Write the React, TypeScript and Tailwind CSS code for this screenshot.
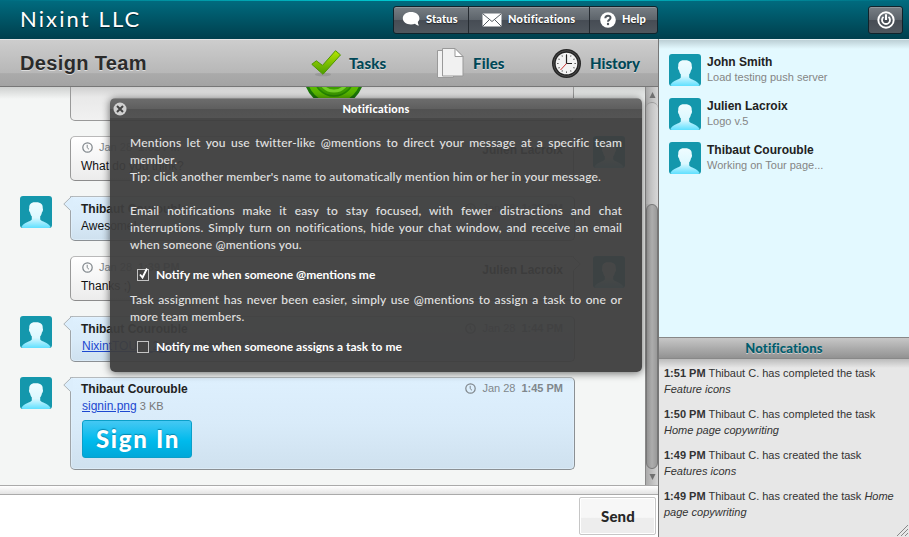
import React from "react";

function Avatar({ id }: { id: string }) {
  return (
    <svg className="block size-8 shrink-0" viewBox="0 0 32 32">
      <defs>
        <linearGradient id={id} x1="0" y1="0" x2="0" y2="1">
          <stop offset="0" stopColor="#effcff" />
          <stop offset=".6" stopColor="#dcf8ff" />
          <stop offset="1" stopColor="#5fe0ff" />
        </linearGradient>
      </defs>
      <rect width="32" height="32" rx="3" fill="#1497ac" />
      <path
        d="M15.500 6.300C11 6 8.900 8.500 9.300 12.300c-.7.700-.3 3.400.8 4.100.3 2 .9 3 1.700 3.900v3.200C10.500 25.600 4 26.300 1.500 30.700L2.500 32h27l1-1.300C28 26.300 21.500 25.600 20.200 23.500v-3.200c.8-.9 1.400-1.900 1.700-3.900 1.100-.7 1.500-3.400.8-4.100.4-3.800-1.700-6.200-7.200-6z"
        fill={`url(#${id})`}
      />
    </svg>
  );
}

function Clock() {
  return (
    <svg className="size-[11px] shrink-0" viewBox="0 0 11 11" fill="none" stroke="currentColor">
      <circle cx="5.500" cy="5.500" r="4.700" strokeWidth="1.200" />
      <path d="M5.200 2.800V5.700L7 7.300" strokeWidth="1" />
    </svg>
  );
}

function Stamp({ time }: { time: string }) {
  return (
    <span className="flex items-center gap-[6px] pr-px pb-px text-[11px] text-[#80878c]">
      <Clock />
      <span>Jan 28</span>
      <b>{time}</b>
    </span>
  );
}

function Bubble({ height, id, children }: { height: string; id: string; children: React.ReactNode }) {
  return (
    <div className="flex">
      <Avatar id={id} />
      <div
        className={`relative ml-[18px] w-[505px] rounded-[5px] rounded-tl-none border border-t-[#b5babd] border-r-[#8b9094] border-b-[#8b9094] border-l-[#a0a5a9] bg-linear-to-b from-[#def0fe] via-[#d9ebf9] to-[#cfe1ef] px-[10px] shadow-[inset_0_0_0_1px_#e6f3fd80] ${height}`}
      >
        <svg className="absolute -top-px -left-[8px] h-4 w-[10px]" viewBox="0 0 10 16">
          <path d="M10 .5H8.500L.8 8 7.500 14.500H10z" fill="#dceefc" />
          <path d="M10 .5H8.500L.8 8 7.500 14.500" fill="none" stroke="#adb3b7" />
        </svg>
        {children}
      </div>
    </div>
  );
}

function Mine({ time, text, id }: { time: string; text: string; id: string }) {
  return (
    <div className="flex pl-[50px]">
      <div className="relative h-[45px] w-[504px] rounded-[5px] rounded-tr-none border border-t-[#b9b9b9] border-r-[#999] border-b-[#8c8c8c] border-l-[#999] bg-linear-to-b from-white to-[#ececec] px-[10px] pt-[4px]">
        <svg className="absolute -top-px -right-[8px] h-4 w-[10px]" viewBox="0 0 10 16">
          <path d="M0 .5H1.500L9.200 8 2.500 14.500H0z" fill="#fafafa" />
          <path d="M0 .5H1.500L9.200 8 2.500 14.500" fill="none" stroke="#aaa" />
        </svg>
        <div className="flex h-[14px] items-center justify-between pl-px">
          <Stamp time={time} />
          <b className="pt-[3px] text-[12px] leading-[14px] text-[#222]">Julien Lacroix</b>
        </div>
        <div className="mt-[4px] text-[12px] leading-[14px] text-[#111]">{text}</div>
      </div>
      <div className="ml-[19px]">
        <Avatar id={id} />
      </div>
    </div>
  );
}

function Head({ time }: { time: string }) {
  return (
    <div className="flex h-[14px] items-center justify-between">
      <b className="text-[12px] text-[#222]">Thibaut Courouble</b>
      <Stamp time={time} />
    </div>
  );
}

function Line({ children }: { children: React.ReactNode }) {
  return <div className="whitespace-nowrap [text-align-last:justify]">{children}</div>;
}

function Check({ on, children }: { on?: boolean; children: React.ReactNode }) {
  return (
    <div className="flex h-[17px] items-center gap-[6px] pl-[7px] text-[12px] font-bold tracking-normal text-white">
      <svg className="h-4 w-[13px] shrink-0" viewBox="0 0 13 16" fill="none">
        <rect x=".5" y="2.500" width="11" height="11" fill="#444" stroke="#c4c4c4" />
        {on && <path d="M3 7.500L5.500 10.500L10 1.500" stroke="#fff" strokeWidth="1.900" />}
      </svg>
      <span>{children}</span>
    </div>
  );
}

const people = [
  ["John Smith", "Load testing push server"],
  ["Julien Lacroix", "Logo v.5"],
  ["Thibaut Courouble", "Working on Tour page..."],
];

const events = [
  { time: "1:51 PM", verb: "completed", inline: "", task: "Feature icons" },
  { time: "1:50 PM", verb: "completed", inline: "", task: "Home page copywriting" },
  { time: "1:49 PM", verb: "created", inline: "", task: "Features icons" },
  { time: "1:49 PM", verb: "created", inline: "Home", task: "page copywriting" },
];

const ticks = [0, 30, 60, 90, 120, 150, 180, 210, 240, 270, 300, 330];

export default function App() {
  return (
    <div className="relative flex h-[537px] w-[909px] flex-col overflow-hidden bg-white font-['Liberation_Sans',Arial,sans-serif]">
      <header className="flex h-[39px] shrink-0 flex-col bg-linear-to-b from-[#006c80] to-[#003f4d]">
        <div className="h-px shrink-0 bg-linear-to-r from-[#006c80] via-[#00d8de] to-[#006c80]" />
        <div className="flex h-[37px] items-center pr-[6px] pl-[20px]">
          <h1 className="w-[373px] pb-[2px] font-['Lato',sans-serif] text-[22px] leading-[34px] tracking-[2.1px] text-white [text-shadow:0_1px_1px_#00232c]">
            Nixint LLC
          </h1>
          <nav className="flex h-[28px] w-[265px] rounded-[3px] border border-[#10232b] bg-[linear-gradient(#777e84,#5d646b_49%,#464c54_50%,#50575e)] font-['Lato',sans-serif] text-[11px] font-black tracking-[.15px] text-white shadow-[inset_0_1px_0_#90979b] [text-shadow:0_1px_1px_#222]">
            <div className="flex w-[75px] items-center gap-[5px] border-r border-[#252b31] pl-[8px]">
              <svg className="h-[17px] w-[19px]" viewBox="0 0 19 17">
                <path d="M9 1C4.300 1 .8 3.700.8 7.200s3.500 6.200 8.200 6.200c1.500 0 2.800-.2 4-.7 1 1 2.600 1.800 4 1.800-.9-1-1.200-2.500-1.100-3.700 1-1 1.500-2.200 1.500-3.600C17.400 3.700 13.700 1 9 1z" fill="#fff" />
              </svg>
              Status
            </div>
            <div className="flex w-[121px] items-center gap-[6px] border-r border-[#252b31] pl-[13px]">
              <svg className="h-[14px] w-5" viewBox="0 0 20 14">
                <rect x=".5" y=".5" width="19" height="13" rx="1" fill="#fff" />
                <path d="M1 1l9 7.500L19 1M1 13l6.500-6.500M19 13l-6.500-6.500" fill="none" stroke="#555c62" />
              </svg>
              <span className="tracking-[.28px]">Notifications</span>
            </div>
            <div className="flex items-center gap-[6px] pl-[10px]">
              <svg className="size-4" viewBox="0 0 16 16">
                <circle cx="8" cy="8" r="7.800" fill="#fff" />
                <path d="M5.300 6.300C5.400 2.800 10.700 3 10.500 6c-.1 1.900-2.500 1.900-2.500 3.800" fill="none" stroke="#50575e" strokeWidth="2" />
                <circle cx="8" cy="12" r="1.200" fill="#50575e" />
              </svg>
              Help
            </div>
          </nav>
          <div className="ml-auto flex h-[28px] w-[35px] items-center justify-center rounded-[3px] border border-[#10232b] bg-[linear-gradient(#777e84,#5d646b_49%,#464c54_50%,#50575e)] shadow-[inset_0_1px_0_#90979b]">
            <svg className="size-[18px]" viewBox="0 0 18 18" fill="none">
              <circle cx="9" cy="9" r="7.700" stroke="#fff" strokeWidth="1.900" />
              <path d="M6.500 5.900A4 4 0 1 0 11.500 5.900" stroke="#fff" strokeWidth="1.800" />
              <path d="M9 3.200V9" stroke="#fff" strokeWidth="2" />
            </svg>
          </div>
        </div>
      </header>

      <div className="flex min-h-0 flex-1">
        <main className="flex w-[659px] flex-col border-r border-[#777]">
          <div className="flex h-[48px] shrink-0 items-center border-t border-b border-t-[#e5e5e5] border-b-[#777] bg-[linear-gradient(#cdcdcd,#b7b7b7_72%,#aaa_73%,#a3a3a3)] pl-[20px] font-['Lato',sans-serif] text-[15px] font-black tracking-[.15px] text-[#004757] [text-shadow:0_1px_0_#ddd]">
            <h2 className="w-[289px] font-['Liberation_Sans',Arial,sans-serif] text-[20px] font-bold tracking-[.35px] text-[#2b2b2b]">Design Team</h2>
            <div className="flex w-[127px] items-center gap-[6px]">
              <svg className="h-7 w-[34px]" viewBox="0 0 34 28">
                <defs>
                  <linearGradient id="tick" x1="0" y1="0" x2="0" y2="1">
                    <stop offset="0" stopColor="#b5e600" />
                    <stop offset="1" stopColor="#4a9d00" />
                  </linearGradient>
                </defs>
                <ellipse cx="14" cy="25.500" rx="8" ry="1.800" fill="#888" opacity=".5" />
                <path d="M2.800 15.300L7.300 11.800l6.200 4.600L26.500 1.700l5 4.200L14 25.300z" fill="url(#tick)" stroke="#4f9600" />
              </svg>
              Tasks
            </div>
            <div className="flex w-[115px] items-center gap-[9px]">
              <svg className="h-[33px] w-7" viewBox="0 0 28 33" fill="#f1f1f1" stroke="#999">
                <path d="M1.500 3.500h16v27h-16z" />
                <path d="M6.500 1.500H19l8 8v19.500H6.500z" />
                <path d="M19 1.500v8h8z" fill="#fff" />
              </svg>
              Files
            </div>
            <div className="flex items-center gap-[8px] tracking-normal">
              <svg className="size-[31px]" viewBox="0 0 31 31">
                <circle cx="15.500" cy="15.500" r="14.500" fill="#262626" />
                <circle cx="15.500" cy="15.500" r="12.800" fill="none" stroke="#555" strokeWidth=".8" />
                <circle cx="15.500" cy="15.500" r="10.800" fill="#f3f3f3" />
                {ticks.map((a) => (
                  <path key={a} d="M15.500 6.200v1.300" stroke="#444" transform={`rotate(${a} 15.500 15.500)`} />
                ))}
                <path d="M15.500 7v8.500H21" fill="none" stroke="#222" strokeWidth="1.200" />
                <path d="M15.500 15.500L9.500 22" stroke="#c33" />
              </svg>
              History
            </div>
          </div>

          <div className="flex min-h-0 flex-1">
            <div className="relative flex w-[645px] flex-col gap-[15px] overflow-hidden bg-[#f4f6f5] bg-[linear-gradient(#cfd1d0,#f4f6f5_12px)] pl-[20px]">
              <div className="relative ml-[50px] h-[34px] w-[504px] shrink-0 overflow-hidden rounded-b-[5px] border border-t-0 border-[#999] bg-[linear-gradient(#cfcfcf,#e9e9e9_10px,#f1f1f1)]">
                <svg className="ml-[231px] h-[30px] w-[64px]" viewBox="0 0 64 30">
                  <circle cx="32" cy="-11" r="30" fill="#1c7a08" />
                  <circle cx="32" cy="-11" r="27" fill="#5ab900" />
                  <circle cx="32" cy="-11" r="20" fill="#3d9d00" stroke="#268700" strokeWidth="1.500" />
                  <circle cx="32" cy="-11" r="15" fill="none" stroke="#74ce28" strokeWidth="3" />
                </svg>
              </div>
              <Mine id="a1" time="1:32 PM" text="What do you think?" />
              <Bubble id="a2" height="h-[45px] pt-[5px]">
                <Head time="1:33 PM" />
                <div className="mt-[3px] text-[12px] leading-[14px] text-[#111]">Awesome!</div>
              </Bubble>
              <Mine id="a3" time="1:39 PM" text="Thanks ;)" />
              <Bubble id="a4" height="h-[46px] pt-[5px]">
                <Head time="1:44 PM" />
                <div className="mt-[3px] pl-px text-[12px] leading-[14px] text-[#777]">
                  <span className="text-[#1c48d0] underline">NixintTOUR_2_visual.doc</span> 38 KB
                </div>
              </Bubble>
              <Bubble id="a5" height="h-[93px] pt-[4px]">
                <Head time="1:45 PM" />
                <div className="mt-[3px] pl-px text-[11px] leading-[14px] text-[#777]">
                  <span className="text-[12px] text-[#1c48d0] underline">signin.png</span> 3 KB
                </div>
                <div className="mt-[7px] ml-px flex h-[38px] w-[110px] items-center justify-center rounded-[3px] border border-[#0a9fc9] bg-[linear-gradient(#45c8f3,#00baec_55%,#00a8d9)] pl-[2px] font-['Lato',sans-serif] text-[24px] font-black tracking-[1.7px] text-white [text-shadow:0_-1px_1px_#0784ac]">
                  Sign In
                </div>
              </Bubble>
            </div>
            <div className="flex w-[13px] flex-col border-l border-[#888] bg-linear-to-r from-[#aaa] to-[#d5d5d5]">
              <div className="flex h-[15px] items-center justify-center text-[#707070]">
                <svg className="h-[6px] w-[7px]" viewBox="0 0 7 6"><path d="M3.500 0L6.500 6H.5z" fill="currentColor" /></svg>
              </div>
              <div className="h-[102px] rounded-t-full border-t border-[#999] bg-linear-to-r from-[#b5b5b5] to-[#d8d8d8]" />
              <div className="h-[265px] rounded-full border border-[#777] bg-linear-to-r from-[#949494] via-[#adadad] to-[#999]" />
              <div className="flex h-[16px] items-center justify-center text-[#707070]">
                <svg className="h-[6px] w-[7px]" viewBox="0 0 7 6"><path d="M3.500 6L6.500 0H.5z" fill="currentColor" /></svg>
              </div>
            </div>
          </div>

          <div className="h-[10px] shrink-0 border-t border-b border-[#aaa] bg-linear-to-b from-white to-[#e3e3e3]" />
          <div className="flex h-[42px] shrink-0 justify-end bg-white pt-[2px] pr-[2px]">
            <div className="flex h-[38px] w-[77px] items-center justify-center rounded-[2px] border border-[#c6c6c6] bg-[linear-gradient(#f7f7f7_54%,#ededed_55%)] pl-px font-['Lato',sans-serif] text-[15px] font-black tracking-[.15px] text-[#282828] shadow-[inset_0_0_0_1px_white]">
              Send
            </div>
          </div>
        </main>

        <aside className="flex w-[250px] flex-col border-t border-[#e5f0f2]">
          <div className="flex h-[297px] shrink-0 flex-col gap-[12px] bg-[linear-gradient(#bccfd5,#e3f9ff_9px)] pt-[14px] pl-[10px]">
            {people.map(([name, status], i) => (
              <div key={name} className="flex gap-[6px]">
                <Avatar id={`p${i}`} />
                <div className="pt-px">
                  <div className="text-[12px] leading-[15px] font-bold text-[#222]">{name}</div>
                  <div className="text-[11px] leading-[15px] text-[#858585]">{status}</div>
                </div>
              </div>
            ))}
          </div>
          <div className="flex h-[22px] shrink-0 items-center justify-center border-t border-b border-[#888] bg-linear-to-b from-[#c7c7c7] to-[#929292] pt-[2px] font-['Lato',sans-serif] text-[13px] font-black tracking-[.15px] text-[#005c6d] [text-shadow:0_1px_0_#ccc]">
            Notifications
          </div>
          <div className="relative flex flex-1 flex-col gap-[9px] bg-[linear-gradient(#bbb,#e7e7e7_9px)] pt-[6px] pl-[5px] text-[11px] leading-4 text-[#333]">
            {events.map((e, i) => (
              <div key={i} className="w-[240px]">
                <div>
                  <b>{e.time}</b> Thibaut C. has {e.verb} the task <i>{e.inline}</i>
                </div>
                <i className="block">{e.task}</i>
              </div>
            ))}
            <svg className="absolute right-[1px] bottom-[1px] size-[11px]" viewBox="0 0 11 11" stroke="#888">
              <path d="M0 11L11 0M4 11l7-7M8 11l3-3" />
            </svg>
          </div>
        </aside>
      </div>

      <section className="absolute top-[98px] left-[110px] flex h-[274px] w-[532px] flex-col overflow-hidden rounded-[5px] font-['Lato',sans-serif] shadow-[0_1px_9px_#0009]">
        <div className="flex h-[20px] shrink-0 items-center border-t border-[#888] bg-[linear-gradient(#6c6c6c,#5f5f5f_50%,#515151_51%,#545454)] pl-[3px]">
          <svg className="size-[14px]" viewBox="0 0 14 14">
            <circle cx="7" cy="7" r="6.500" fill="#d0d0d0" />
            <path d="M4 4l6 6M10 4l-6 6" stroke="#444" strokeWidth="2" />
          </svg>
          <span className="flex-1 pt-px pr-[17px] text-center text-[11px] font-black tracking-[.25px] text-white">Notifications</span>
        </div>
        <div className="flex-1 bg-[#3e3e3ef3] px-[20px] pt-[16px] text-[12px] leading-[17px] font-medium tracking-[.155px] text-[#e2e2e2]">
          <Line>Mentions let you use twitter-like @mentions to direct your message at a specific team</Line>
          <div>member.</div>
          <div>Tip: click another member&apos;s name to automatically mention him or her in your message.</div>
          <div className="mt-[17px]" />
          <Line>Email notifications make it easy to stay focused, with fewer distractions and chat</Line>
          <Line>interruptions. Simply turn on notifications, hide your chat window, and receive an email</Line>
          <div>when someone @mentions you.</div>
          <div className="mt-[13px]" />
          <Check on>Notify me when someone @mentions me</Check>
          <div className="mt-[8px]" />
          <Line>Task assignment has never been easier, simply use @mentions to assign a task to one or</Line>
          <div>more team members.</div>
          <div className="mt-[13px]" />
          <Check>Notify me when someone assigns a task to me</Check>
        </div>
      </section>
    </div>
  );
}
